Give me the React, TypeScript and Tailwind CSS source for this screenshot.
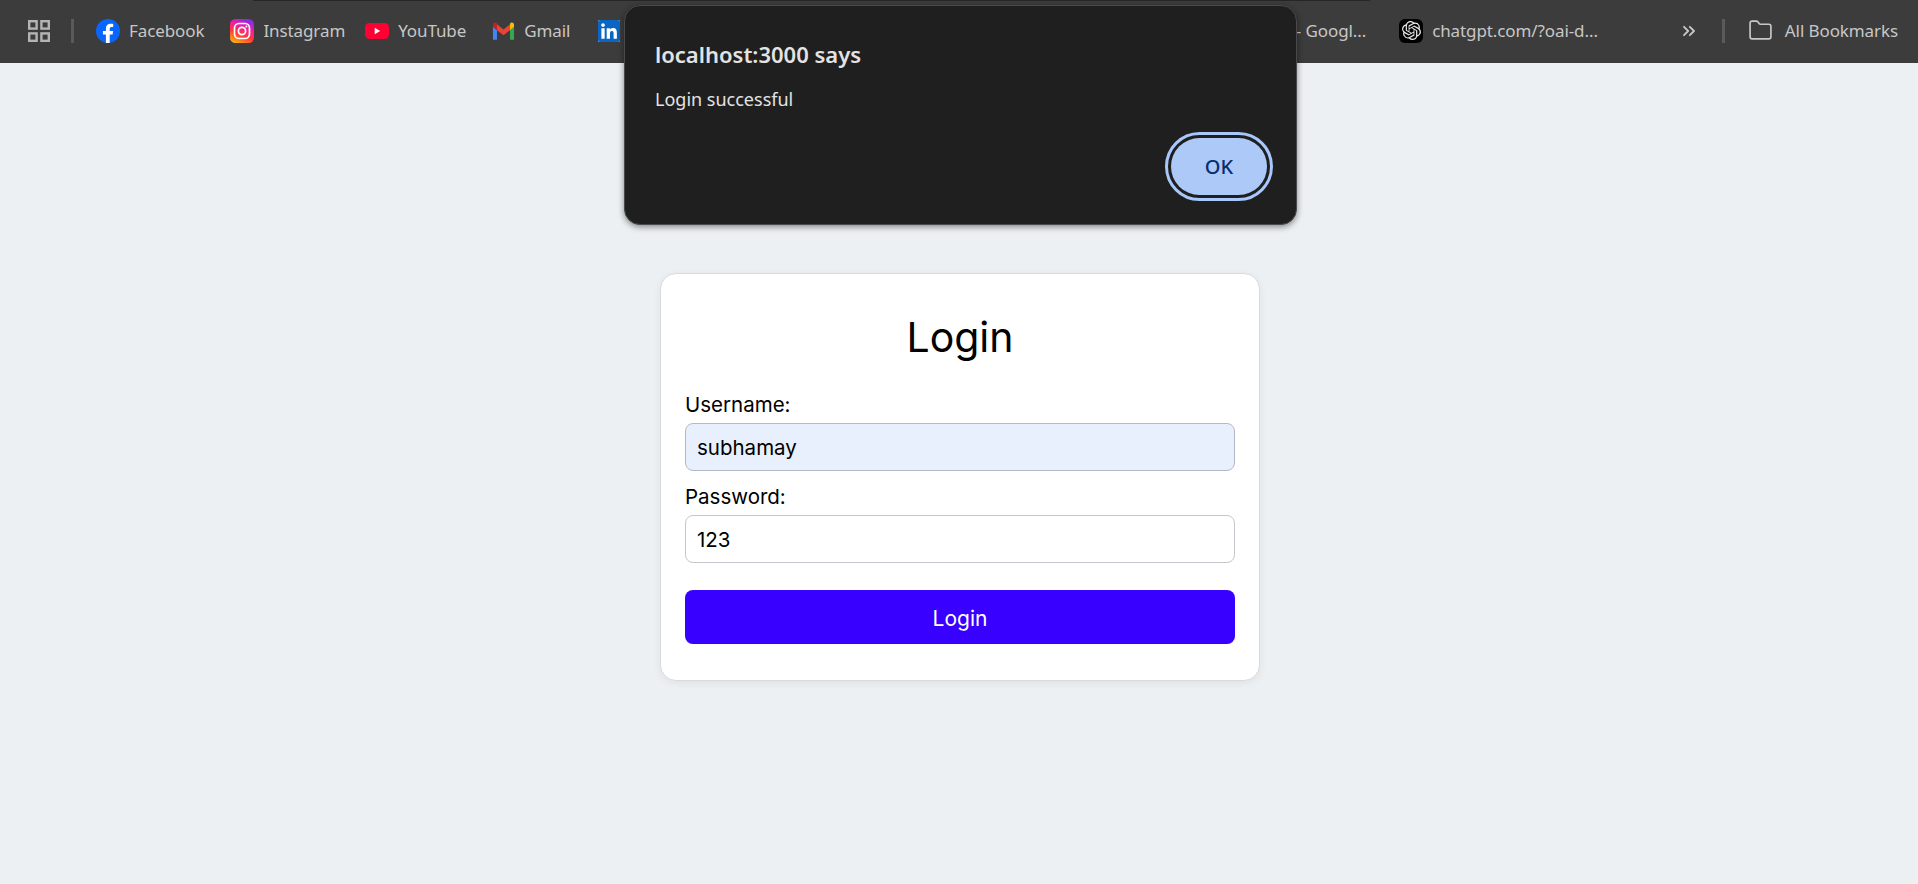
import { Folder, ChevronsRight } from 'lucide-react';
import { FaLinkedin } from 'react-icons/fa';
import { SiOpenai } from 'react-icons/si';

function FacebookIcon() {
  return (
    <svg viewBox="0 0 24 24" className="size-6 shrink-0">
      <circle cx="12" cy="12" r="12" fill="#0866ff" />
      <path d="M16.6 15.5l.5-3.5h-3.4V9.8c0-1 .5-1.9 2-1.9h1.5v-3s-1.4-.2-2.7-.2c-2.8 0-4.6 1.7-4.6 4.7V12H6.9v3.5h3v8.4a12 12 0 0 0 3.8 0v-8.4z" fill="#fff" />
    </svg>
  );
}

function InstagramIcon() {
  return (
    <svg viewBox="0 0 24 24" className="size-6 shrink-0">
      <defs>
        <linearGradient id="ig" x1="0.15" y1="1" x2="0.6" y2="0">
          <stop offset="0" stopColor="#ffb800" />
          <stop offset="0.4" stopColor="#ff3a3a" />
          <stop offset="0.7" stopColor="#f01ea0" />
          <stop offset="1" stopColor="#8a2be8" />
        </linearGradient>
      </defs>
      <rect width="24" height="24" rx="5.5" fill="url(#ig)" />
      <rect x="4.5" y="4.5" width="15" height="15" rx="4.5" fill="none" stroke="#fff" strokeWidth="1.7" />
      <circle cx="12" cy="12" r="3.6" fill="none" stroke="#fff" strokeWidth="1.7" />
      <circle cx="16.4" cy="7.6" r="1" fill="#fff" />
    </svg>
  );
}

function YoutubeIcon() {
  return (
    <svg viewBox="0 0 24 24" className="size-6 shrink-0">
      <rect x="0" y="4" width="24" height="16" rx="4.5" fill="#ff0033" />
      <path d="M9.7 8.8v6.4l5.5-3.2z" fill="#fff" />
    </svg>
  );
}

function GmailIcon() {
  return (
    <svg viewBox="0 0 24 24" className="h-6 w-[23px] shrink-0">
      <path d="M1 21h4.2V11.2L1 7.6z" fill="#4285f4" />
      <path d="M18.8 21H23V7.6l-4.2 3.6z" fill="#34a853" />
      <path d="M5.2 11.2L12 16.4l6.8-5.2V5L12 10.4 5.2 5z" fill="#ea4335" />
      <path d="M18.8 5v6.2L23 7.6V5.6C23 3.4 20.6 2.6 19 3.8z" fill="#fbbc04" />
      <path d="M1 7.6l4.2 3.6V5L5 3.8C3.4 2.6 1 3.4 1 5.6z" fill="#c5221f" />
    </svg>
  );
}

function LinkedinIcon() {
  return (
    <span className="size-[22px] shrink-0 bg-white flex items-center justify-center overflow-hidden rounded-[2px]">
      <FaLinkedin className="size-[26px] text-[#0a66c2]" />
    </span>
  );
}

function ChatgptIcon() {
  return (
    <span className="size-6 shrink-0 rounded-md bg-black flex items-center justify-center">
      <SiOpenai className="size-[19px] text-[#e8e8e8]" />
    </span>
  );
}

function GridIcon() {
  return (
    <svg viewBox="0 0 22 22" className="size-[22px] shrink-0" fill="none" stroke="#b4b4b4" strokeWidth="2.4">
      <rect x="1.2" y="1.2" width="7.4" height="7.4" />
      <rect x="13.4" y="1.2" width="7.4" height="7.4" />
      <rect x="1.2" y="13.4" width="7.4" height="7.4" />
      <rect x="13.4" y="13.4" width="7.4" height="7.4" />
    </svg>
  );
}

function Bookmark({ icon, label, className }: { icon: React.ReactNode; label: string; className?: string }) {
  return (
    <div className={`flex items-center gap-[9px] ${className ?? ''}`}>
      {icon}
      <span className="whitespace-nowrap">{label}</span>
    </div>
  );
}

function BookmarksBar() {
  return (
    <div className="h-[63px] bg-[#3c3c3c] flex items-center pl-7 pr-5 pb-[2px] text-[17px] text-[#c7c7c7] font-['Noto_Sans',sans-serif] tracking-[-0.1px]">
      <GridIcon />
      <div className="w-[3px] h-6 bg-[#5a5a5a] ml-[21px] mr-[22px]"></div>
      <Bookmark icon={<FacebookIcon />} label="Facebook" className="mr-[26px]" />
      <Bookmark icon={<InstagramIcon />} label="Instagram" className="mr-[20px]" />
      <Bookmark icon={<YoutubeIcon />} label="YouTube" className="mr-[26px]" />
      <Bookmark icon={<GmailIcon />} label="Gmail" className="mr-[28px]" />
      <LinkedinIcon />
      <span className="flex-1"></span>
      <span className="whitespace-nowrap mr-[33px]">- Googl...</span>
      <Bookmark icon={<ChatgptIcon />} label="chatgpt.com/?oai-d..." />
      <ChevronsRight className="size-[20px] ml-[81px] text-[#c7c7c7]" strokeWidth={2.2} />
      <div className="w-[3px] h-6 bg-[#5a5a5a] ml-[23px] mr-[23px]"></div>
      <Folder className="size-[25px] mr-[12px] text-[#c7c7c7]" strokeWidth={1.6} />
      <span className="whitespace-nowrap">All Bookmarks</span>
    </div>
  );
}

function AlertDialog() {
  return (
    <div className="absolute left-[624px] top-[5px] w-[673px] h-[220px] rounded-2xl bg-[#1f1f1f] border border-[#4a4a4a] shadow-[0_2px_6px_rgba(0,0,0,0.45)] pl-[30px] pr-[29px] pt-[34px] font-['Noto_Sans',sans-serif]">
      <h2 className="text-[22px] leading-7 font-semibold text-[#e3e3e3]">localhost:3000 says</h2>
      <p className="mt-[19px] text-[18px] leading-6 text-[#e3e3e3]">Login successful</p>
      <div className="flex justify-end mt-[27px]">
        <button className="w-[96px] h-[57px] rounded-full bg-[#adc9f7] outline-[3px] outline-offset-[3px] outline-[#a8c7fa] text-[#062e6f] text-[20px] font-medium">
          OK
        </button>
      </div>
    </div>
  );
}

function LoginCard() {
  return (
    <div className="w-[600px] ml-[660px] mt-[210px] bg-white border border-[#d8dade] rounded-2xl shadow-[0_2px_8px_rgba(0,0,0,0.06)] px-6 pt-[35px] pb-[36px] font-['Inter',sans-serif] text-black">
      <h1 className="text-[41px] leading-[56px] text-center">Login</h1>
      <label className="block mt-[26px] text-[20.5px] leading-[28px]">Username:</label>
      <input
        readOnly
        value="subhamay"
        className="block w-full h-[48px] mt-[4px] px-[11px] text-[20.5px] bg-[#e8f0fe] border border-[#b4b9c4] rounded-lg outline-none"
      />
      <label className="block mt-[12px] text-[20.5px] leading-[28px]">Password:</label>
      <input
        readOnly
        value="123"
        className="block w-full h-[48px] mt-[4px] px-[11px] text-[20.5px] bg-white border border-[#c4c7cc] rounded-lg outline-none"
      />
      <button className="block w-full h-[54px] mt-[27px] pt-[3px] bg-[#3700ff] text-white text-[21px] rounded-lg">Login</button>
    </div>
  );
}

export default function App() {
  return (
    <div className="relative min-h-[884px] bg-[#ecf0f3] overflow-hidden">
      <BookmarksBar />
      {/* tab strip edge peeking above the bar */}
      <div className="absolute left-[253px] top-0 w-[1117px] h-px bg-[#262626]"></div>
      <LoginCard />
      <AlertDialog />
    </div>
  );
}
